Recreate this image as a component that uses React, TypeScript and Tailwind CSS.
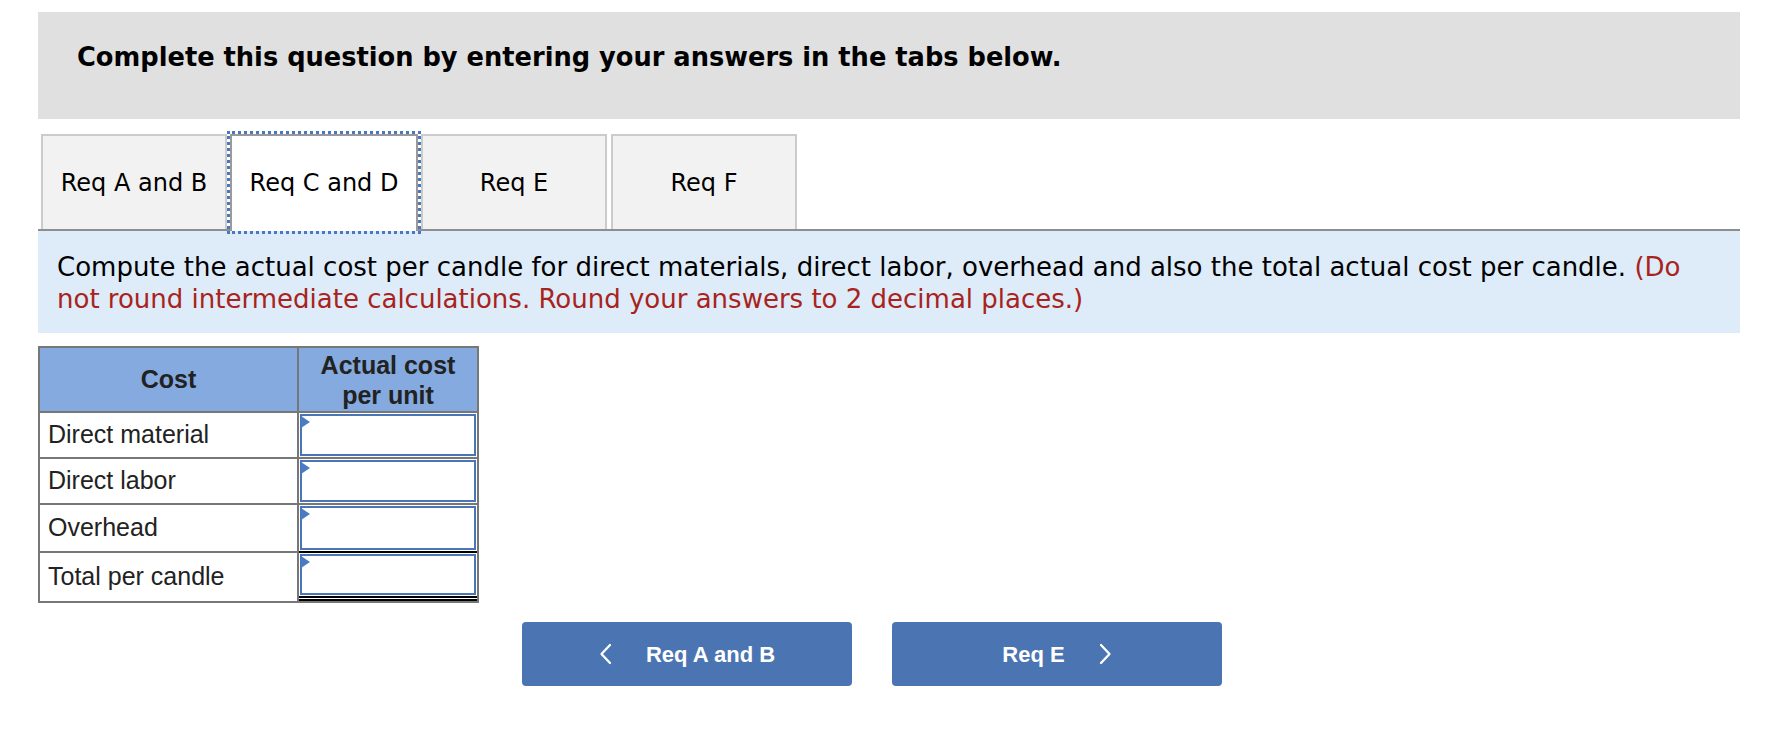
import React from "react";

const tabs = ["Req A and B", "Req C and D", "Req E", "Req F"];

const rows = [
  { label: "Direct material", h: "h-[46px]", line: "" },
  { label: "Direct labor", h: "h-[46px]", line: "" },
  { label: "Overhead", h: "h-[48px]", line: "single" },
  { label: "Total per candle", h: "h-[48px]", line: "double" },
];

const Chevron = ({ dir }: { dir: "left" | "right" }) => (
  <svg width="13" height="22" viewBox="0 0 13 22" fill="none">
    <path
      d={dir === "left" ? "M11 2 L2.5 11 L11 20" : "M2 2 L10.5 11 L2 20"}
      stroke="white"
      strokeWidth="2.3"
      strokeLinecap="round"
      strokeLinejoin="round"
    />
  </svg>
);

const App = () => {
  return (
    <div className="min-h-screen bg-white pt-[12px]">
      <div className="ml-[38px] w-[1702px]">
        {/* instructions header */}
        <div className="h-[107px] bg-[#e0e0e0] pl-[39px] pt-[30px]">
          <p className="font-['DejaVu_Sans',sans-serif] text-[25.7px] font-bold leading-[30px] text-black">
            Complete this question by entering your answers in the tabs below.
          </p>
        </div>

        {/* tabs */}
        <div className="mt-[15px] flex items-end border-b-2 border-[#8e8e8e] pl-[3px]">
          {tabs.map((t, i) =>
            i === 1 ? (
              <div
                key={t}
                className="relative z-10 mx-[3px] -mb-[2px] flex h-[97px] w-[188px] items-center justify-center border-2 border-b-0 border-[#9a9a9a] bg-white pb-[2px] font-['DejaVu_Sans',sans-serif] text-[24px] text-black outline-[3px] outline-dotted outline-[#4a77c2]"
              >
                {t}
              </div>
            ) : (
              <div
                key={t}
                className={`flex h-[95px] w-[186px] items-center justify-center border-2 border-b-0 border-[#cbcbcb] bg-[#f2f2f2] font-['DejaVu_Sans',sans-serif] text-[24px] text-black ${i === 3 ? "ml-[4px]" : ""}`}
              >
                {t}
              </div>
            )
          )}
        </div>

        {/* prompt band */}
        <div className="h-[102px] bg-[#deebf8] pl-[19px] pr-[40px] pt-[20px]">
          <p className="font-['DejaVu_Sans',sans-serif] text-[26px] leading-[32px] text-black">
            Compute the actual cost per candle for direct materials, direct labor, overhead and also the total actual cost
            per candle. <span className="text-[#a8231c]">(Do not round intermediate calculations. Round your answers to 2 decimal places.)</span>
          </p>
        </div>

        {/* answer table */}
        <div className="mt-[13px] w-[441px] border-2 border-[#777777] font-['Liberation_Sans',Arial,sans-serif] text-[#222222]">
          <div className="flex h-[65px] border-b-2 border-[#777777] bg-[#84aadf]">
            <div className="flex w-[259px] items-center justify-center border-r-2 border-[#777777] text-[25px] font-bold">
              Cost
            </div>
            <div className="flex flex-1 items-center justify-center text-center text-[25px] font-bold leading-[30px]">
              Actual cost
              <br />
              per unit
            </div>
          </div>
          {rows.map((r, i) => (
            <div
              key={r.label}
              className={`flex ${r.h} ${i < rows.length - 1 ? "border-b-2 border-[#777777]" : ""}`}
            >
              <div className="flex w-[259px] items-center border-r-2 border-[#777777] pl-[8px] text-[25px]">
                {r.label}
              </div>
              <div
                className={`relative flex-1 ${r.line === "single" ? "border-b-2 border-black -mb-[2px]" : ""} ${r.line === "double" ? "border-b-[5px] border-double border-black" : ""}`}
              >
                <div className="absolute inset-[1px] border-2 border-[#4a76b8] bg-white">
                  <input className="h-full w-full bg-transparent px-2 text-right text-[22px] outline-none" />
                </div>
                <span className="absolute left-[2px] top-[3px] h-0 w-0 border-y-[6px] border-l-[9px] border-y-transparent border-l-[#4a7bc4]" />
              </div>
            </div>
          ))}
        </div>

        {/* navigation */}
        <div className="ml-[484px] mt-[19px] flex gap-[40px] font-['Liberation_Sans',Arial,sans-serif]">
          <button className="flex h-[64px] w-[330px] items-center justify-center gap-[34px] rounded-[4px] bg-[#4a75b2] text-[22px] font-bold text-white">
            <Chevron dir="left" />
            <span>Req A and B</span>
          </button>
          <button className="flex h-[64px] w-[330px] items-center justify-center gap-[34px] rounded-[4px] bg-[#4a75b2] text-[22px] font-bold text-white">
            <span>Req E</span>
            <Chevron dir="right" />
          </button>
        </div>
      </div>
    </div>
  );
};

export default App;
